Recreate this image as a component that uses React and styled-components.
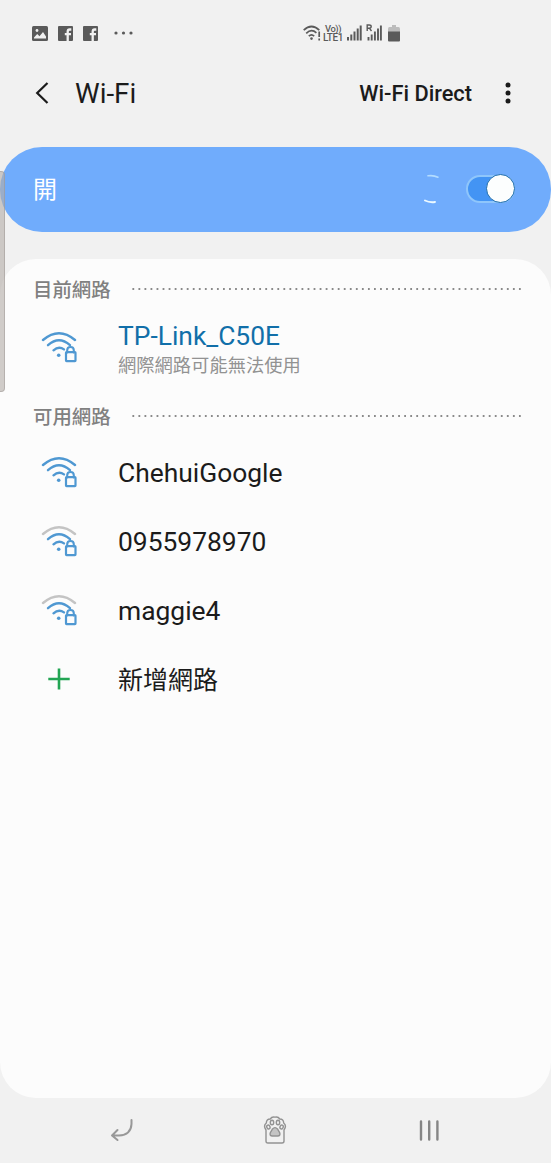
import React from "react";
import styled, { createGlobalStyle } from "styled-components";

const Global = createGlobalStyle`
  * { box-sizing: border-box; }
  body { margin: 0; background: #f1f1f1; }
`;

const Screen = styled.div`
  position: relative;
  width: 551px;
  height: 1163px;
  display: flex;
  flex-direction: column;
  overflow: hidden;
  background: #f1f1f1;
  color: #1b1b1b;
  font-family: Roboto, "Noto Sans CJK TC", sans-serif;
`;

const StatusBar = styled.header`
  height: 66px;
  flex: none;
  display: flex;
  align-items: center;
  padding-left: 32px;
  color: #5a5a5a;
  svg { display: block; flex: none; }
`;

const Notifications = styled.div`
  display: flex;
  align-items: center;
  gap: 10px;
  width: 271px;
`;

const Signals = styled.div`
  display: flex;
  align-items: center;
`;

const VoLte = styled.div`
  display: flex;
  flex-direction: column;
  width: 21px;
  margin: 0 3px 0 2px;
  font-weight: 500;
  font-size: 10px;
  line-height: 10px;
  letter-spacing: -0.4px;
  white-space: nowrap;
  span:first-child { padding-left: 2px; font-size: 9.4px; line-height: 9px; }
`;

const AppBar = styled.div`
  height: 54px;
  flex: none;
  display: flex;
  align-items: center;
  padding: 0 35px;
  svg { display: block; flex: none; }
`;

const Title = styled.h1`
  margin: 2px 0 0 26px;
  flex: 1;
  font-size: 27.8px;
  line-height: 32px;
  font-weight: 400;
`;

const Direct = styled.span`
  margin: 2px 33px 0 0;
  font-size: 21.8px;
  line-height: 28px;
  font-weight: 500;
`;

const PowerBar = styled.section`
  height: 85px;
  flex: none;
  margin-top: 27px;
  padding: 0 36px 2px 33px;
  border-radius: 42px;
  background: #70acfc;
  color: #fff;
  display: flex;
  align-items: center;
  font-size: 24px;
  svg { display: block; margin: 0 25px 0 0; }
`;

const PowerLabel = styled.span`
  flex: 1;
  line-height: 32px;
  padding-top: 2px;
`;

const Toggle = styled.div`
  width: 49px;
  height: 28px;
  border: 2px solid #8fc6fb;
  border-radius: 14px;
  background: #4394f4;
  display: flex;
  align-items: center;
  justify-content: flex-end;
`;

const Knob = styled.div`
  width: 29px;
  height: 29px;
  flex: none;
  margin-right: -2px;
  border: 1.5px solid #1c6cab;
  border-radius: 50%;
  background: #fcfefe;
`;

const Panel = styled.main`
  height: 839px;
  flex: none;
  margin-top: 27px;
  padding-top: 8px;
  border-radius: 36px;
  background: #fcfcfc;
`;

const SectionHead = styled.div`
  height: 44px;
  display: flex;
  align-items: center;
  padding: 0 0 2px 33px;
  color: #808080;
  font-size: 19.4px;
  font-weight: 500;
  svg { display: block; margin: 1px 0 0 21px; }
`;

const Row = styled.div`
  height: ${(p) => (p.$tall ? 83 : 69.4)}px;
  display: flex;
  align-items: center;
  padding-left: 40px;
  svg { display: block; flex: none; }
`;

const IconCell = styled.div`
  width: 78px;
  margin-top: ${(p) => p.$top || 0}px;
`;

const Names = styled.div`
  display: flex;
  flex-direction: column;
  margin-top: -6px;
`;

const Name = styled.span`
  font-size: ${(p) => p.$size || 26.4}px;
  line-height: 32px;
  color: ${(p) => (p.$active ? "#116fa9" : "#1b1b1b")};
  white-space: nowrap;
`;

const Note = styled.span`
  font-size: 18.3px;
  line-height: 28px;
  color: #929292;
`;

const NavBar = styled.nav`
  flex: 1;
  display: flex;
  align-items: center;
  justify-content: space-between;
  padding: 0 111px 1px 109px;
  svg { display: block; }
`;

const ScrollHandle = styled.div`
  position: absolute;
  left: -5px;
  top: 171px;
  width: 10px;
  height: 221px;
  border-radius: 4px;
  border: 1px solid rgba(150, 145, 142, 0.45);
  background: rgba(180, 174, 170, 0.62);
`;

const Photo = () => (
  <svg width="16" height="15" viewBox="0 0 16 15">
    <rect width="16" height="15" rx="1.500" fill="currentColor" />
    <path fill="#f1f1f1" d="M2 11.500L5.200 8l2.300 2.200L11 6l3 4.500v2H2z" />
    <circle cx="5" cy="4.500" r="1.400" fill="#f1f1f1" />
  </svg>
);

const Facebook = () => (
  <svg width="15" height="15" viewBox="0 0 15 15">
    <rect width="15" height="15" rx="1" fill="currentColor" />
    <path d="M9.700 15V5.800Q9.700 3.500 11.700 3.500H13.300M6.800 8.200H13" fill="none" stroke="#f1f1f1" strokeWidth="2.300" />
  </svg>
);

const MoreDots = () => (
  <svg width="21" height="4" viewBox="0 0 21 4" fill="currentColor" style={{ marginLeft: 5 }}>
    <circle cx="3" cy="2" r="1.600" /><circle cx="10.500" cy="2" r="1.600" /><circle cx="18" cy="2" r="1.600" />
  </svg>
);

const StatusWifi = () => (
  <svg width="18" height="16" viewBox="0 0 18 16" fill="none" stroke="currentColor" strokeWidth="1.700">
    <path d="M.7 5.200Q8.500-2.200 16.300 5.200M3.200 8.300Q8.500 3.200 13.400 7.800M5.800 11.200Q8.500 8.700 11.200 11.200" />
    <circle cx="8.500" cy="13.600" r="1.300" fill="currentColor" stroke="none" />
    <path d="M16.200 6.500v5.500M16.200 13.500v2" />
  </svg>
);

const Bars = () => (
  <svg width="15" height="16" viewBox="0 0 15 16" stroke="currentColor" strokeWidth="2">
    <path d="M1 12v3.500M4.300 9.500v6M7.500 6.500v9M10.700 3.500v12M13.700 .5v15" />
  </svg>
);

const RoamingBars = () => (
  <svg width="16" height="18" viewBox="0 0 16 18" fill="none" stroke="currentColor">
    <path d="M1.200 7V1h2q2 0 2 1.600T3.200 4.200h-2M3.400 4.200L5.500 7" strokeWidth="1.400" />
    <path d="M2.500 13v3.500M5.700 10.500v6M8.900 7.500v9M12 4.500v12M14.900 1.500v15" strokeWidth="1.900" />
  </svg>
);

const Battery = () => (
  <svg width="12" height="17" viewBox="0 0 12 17">
    <path fill="#bcbcbc" d="M4 0h4v2h2.500Q12 2 12 4v3H0V4Q0 2 1.500 2H4z" />
    <path fill="currentColor" d="M0 6.500h12V15.500Q12 16.500 11 16.500H1Q0 16.500 0 15.500z" />
  </svg>
);

const Back = () => (
  <svg width="14" height="22" viewBox="0 0 14 22" fill="none" stroke="#1b1b1b" strokeWidth="2.200">
    <path d="M12.500 1L2.200 11l10.300 10" />
  </svg>
);

const Kebab = () => (
  <svg width="6" height="22" viewBox="0 0 6 22" fill="#1b1b1b" style={{ marginRight: 5 }}>
    <circle cx="3" cy="3" r="2.500" /><circle cx="3" cy="11" r="2.500" /><circle cx="3" cy="19" r="2.500" />
  </svg>
);

const Spinner = () => (
  <svg width="17" height="30" viewBox="0 0 17 30" fill="none" strokeWidth="1.600" strokeLinecap="round">
    <path d="M4 1.800Q9.500 1 14 3.200" stroke="#b3dcff" />
    <path d="M1 26.500Q5.500 28.800 11 28" stroke="#edfaff" strokeWidth="1.900" />
  </svg>
);

const Dotted = () => (
  <svg width="390" height="2" viewBox="0 0 390 2">
    <path d="M.4 1H390" stroke="#8a8a8a" strokeWidth="1.800" strokeDasharray="1.800 4.240" />
  </svg>
);

const WifiLock = ({ weak }) => (
  <svg width="38" height="34" viewBox="0 0 38 34" fill="none" stroke="#4f98d2" strokeWidth="2.400" strokeLinecap="round">
    <path d="M3 9Q19-4.600 35 9" stroke={weak ? "#c4c4c4" : "#4f98d2"} />
    <path d="M8 14.200Q19 4.500 30 14.200M13.500 19.300Q18.800 14.500 24 18.400" />
    <circle cx="18.700" cy="24.300" r="1.800" fill="#4f98d2" stroke="none" />
    <path d="M27.200 21.500v-2.300q0-3.200 3.300-3.200t3.300 3.200v2.300" strokeWidth="2.100" />
    <rect x="26" y="21.200" width="9.500" height="9" rx=".6" strokeWidth="2.200" />
  </svg>
);

const Plus = () => (
  <svg width="38" height="22" viewBox="0 0 38 22">
    <path d="M19 .5v21M8.300 11h21.400" stroke="#22a553" strokeWidth="2.600" />
  </svg>
);

const Return = () => (
  <svg width="25" height="24" viewBox="0 0 25 24" fill="none" stroke="#989898" strokeWidth="2" strokeLinecap="round" strokeLinejoin="round">
    <path d="M22.500 2v4Q22 17 10 17.500H3M8.500 12L3 17.500l5.500 4.500" />
  </svg>
);

const Paw = () => (
  <svg width="24" height="28" viewBox="0 0 24 28" fill="none" stroke="#929292" strokeWidth="1.400" style={{ marginLeft: -3 }}>
    <path d="M3 14Q0 9.500 3.300 7Q3.500 3 7.200 3Q9 .3 12 1.200Q15 .3 16.800 3Q20.500 3 20.700 7Q24 9.500 21 14V25Q21 27 19 27H5Q3 27 3 25z" />
    <ellipse cx="9" cy="6.500" rx="1.700" ry="2.300" />
    <ellipse cx="15" cy="6.500" rx="1.700" ry="2.300" />
    <ellipse cx="5.400" cy="11" rx="1.600" ry="2" transform="rotate(-20 5.400 11)" />
    <ellipse cx="18.600" cy="11" rx="1.600" ry="2" transform="rotate(20 18.600 11)" />
    <path d="M9.500 13Q12 10.300 14.500 13L16.800 17Q17.500 20 14.700 20H9.300Q6.500 20 7.200 17z" fill="#c4c4c4" />
  </svg>
);

const Recents = () => (
  <svg width="21" height="21" viewBox="0 0 21 21" stroke="#858585" strokeWidth="2.400" strokeLinecap="round">
    <path d="M2 1.500v18M10.200 1.500v18M18.400 1.500v18" />
  </svg>
);

const networks = [
  { name: "ChehuiGoogle", weak: false },
  { name: "0955978970", weak: true },
  { name: "maggie4", weak: true },
];

export default function App() {
  return (
    <Screen>
      <Global />
      <StatusBar>
        <Notifications><Photo /><Facebook /><Facebook /><MoreDots /></Notifications>
        <Signals>
          <StatusWifi />
          <VoLte><span>Vo))</span><span>LTE1</span></VoLte>
          <Bars />
          <svg width="4" height="1" />
          <RoamingBars />
          <svg width="6" height="1" />
          <Battery />
        </Signals>
      </StatusBar>
      <AppBar>
        <Back />
        <Title>Wi-Fi</Title>
        <Direct>Wi-Fi Direct</Direct>
        <Kebab />
      </AppBar>
      <PowerBar>
        <PowerLabel>開</PowerLabel>
        <Spinner />
        <Toggle><Knob /></Toggle>
      </PowerBar>
      <Panel>
        <SectionHead>目前網路<Dotted /></SectionHead>
        <Row $tall>
          <IconCell $top={-9}><WifiLock /></IconCell>
          <Names>
            <Name $active>TP-Link_C50E</Name>
            <Note>網際網路可能無法使用</Note>
          </Names>
        </Row>
        <SectionHead>可用網路<Dotted /></SectionHead>
        {networks.map((n) => (
          <Row key={n.name}>
            <IconCell><WifiLock weak={n.weak} /></IconCell>
            <Name>{n.name}</Name>
          </Row>
        ))}
        <Row>
          <IconCell $top={-3}><Plus /></IconCell>
          <Name $size={25}>新增網路</Name>
        </Row>
      </Panel>
      <NavBar><Return /><Paw /><Recents /></NavBar>
      <ScrollHandle />
    </Screen>
  );
}
